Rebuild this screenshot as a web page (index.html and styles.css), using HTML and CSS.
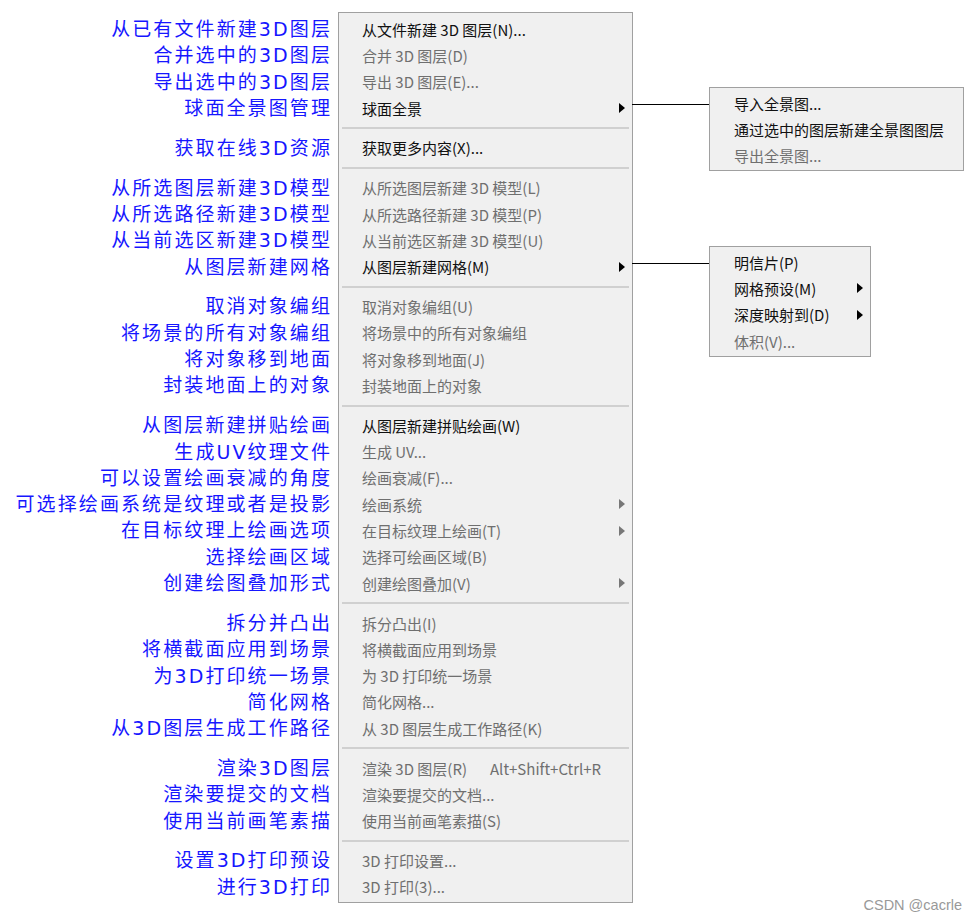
FILE: index.html
```html
<!DOCTYPE html>
<html lang="zh-CN">

<head>
    <meta charset="UTF-8">
    <meta name="viewport" content="width=device-width, initial-scale=1.0">
    <title>3D 菜单说明</title>
    <link rel="stylesheet" href="styles.css">
</head>

<body>
    <div class="page">

        <!-- explanations beside each menu row -->
        <div class="labels">
            <div class="label">从已有文件新建3D图层</div>
            <div class="label">合并选中的3D图层</div>
            <div class="label">导出选中的3D图层</div>
            <div class="label">球面全景图管理</div>
            <div class="gap"></div>
            <div class="label">获取在线3D资源</div>
            <div class="gap"></div>
            <div class="label">从所选图层新建3D模型</div>
            <div class="label">从所选路径新建3D模型</div>
            <div class="label">从当前选区新建3D模型</div>
            <div class="label">从图层新建网格</div>
            <div class="gap"></div>
            <div class="label">取消对象编组</div>
            <div class="label">将场景的所有对象编组</div>
            <div class="label">将对象移到地面</div>
            <div class="label">封装地面上的对象</div>
            <div class="gap"></div>
            <div class="label">从图层新建拼贴绘画</div>
            <div class="label">生成UV纹理文件</div>
            <div class="label">可以设置绘画衰减的角度</div>
            <div class="label">可选择绘画系统是纹理或者是投影</div>
            <div class="label">在目标纹理上绘画选项</div>
            <div class="label">选择绘画区域</div>
            <div class="label">创建绘图叠加形式</div>
            <div class="gap"></div>
            <div class="label">拆分并凸出</div>
            <div class="label">将横截面应用到场景</div>
            <div class="label">为3D打印统一场景</div>
            <div class="label">简化网格</div>
            <div class="label">从3D图层生成工作路径</div>
            <div class="gap"></div>
            <div class="label">渲染3D图层</div>
            <div class="label">渲染要提交的文档</div>
            <div class="label">使用当前画笔素描</div>
            <div class="gap"></div>
            <div class="label">设置3D打印预设</div>
            <div class="label">进行3D打印</div>
        </div>

        <!-- the 3D menu itself -->
        <div class="menu">
            <div class="item">从文件新建 3D 图层(N)...</div>
            <div class="item off">合并 3D 图层(D)</div>
            <div class="item off">导出 3D 图层(E)...</div>
            <div class="item">球面全景<span class="arrow"></span></div>
            <div class="sep"></div>
            <div class="item">获取更多内容(X)...</div>
            <div class="sep"></div>
            <div class="item off">从所选图层新建 3D 模型(L)</div>
            <div class="item off">从所选路径新建 3D 模型(P)</div>
            <div class="item off">从当前选区新建 3D 模型(U)</div>
            <div class="item">从图层新建网格(M)<span class="arrow"></span></div>
            <div class="sep"></div>
            <div class="item off">取消对象编组(U)</div>
            <div class="item off">将场景中的所有对象编组</div>
            <div class="item off">将对象移到地面(J)</div>
            <div class="item off">封装地面上的对象</div>
            <div class="sep"></div>
            <div class="item">从图层新建拼贴绘画(W)</div>
            <div class="item off">生成 UV...</div>
            <div class="item off">绘画衰减(F)...</div>
            <div class="item off">绘画系统<span class="arrow"></span></div>
            <div class="item off">在目标纹理上绘画(T)<span class="arrow"></span></div>
            <div class="item off">选择可绘画区域(B)</div>
            <div class="item off">创建绘图叠加(V)<span class="arrow"></span></div>
            <div class="sep"></div>
            <div class="item off">拆分凸出(I)</div>
            <div class="item off">将横截面应用到场景</div>
            <div class="item off">为 3D 打印统一场景</div>
            <div class="item off">简化网格...</div>
            <div class="item off">从 3D 图层生成工作路径(K)</div>
            <div class="sep"></div>
            <div class="item off"><span class="name">渲染 3D 图层(R)</span><span class="shortcut">Alt+Shift+Ctrl+R</span></div>
            <div class="item off">渲染要提交的文档...</div>
            <div class="item off">使用当前画笔素描(S)</div>
            <div class="sep"></div>
            <div class="item off">3D 打印设置...</div>
            <div class="item off">3D 打印(3)...</div>
        </div>

        <!-- opened submenus -->
        <div class="link link-pano"></div>
        <div class="submenu submenu-pano">
            <div class="item">导入全景图...</div>
            <div class="item">通过选中的图层新建全景图图层</div>
            <div class="item off">导出全景图...</div>
        </div>

        <div class="link link-mesh"></div>
        <div class="submenu submenu-mesh">
            <div class="item">明信片(P)</div>
            <div class="item">网格预设(M)<span class="arrow"></span></div>
            <div class="item">深度映射到(D)<span class="arrow"></span></div>
            <div class="item off">体积(V)...</div>
        </div>

        <div class="watermark">CSDN @cacrle</div>
    </div>
</body>

</html>
```

FILE: styles.css
```css
body {
    margin: 0;
    padding: 0;
    background: #fff;
}

.page {
    position: relative;
    display: flex;
    width: 980px;
    height: 920px;
    padding-top: 12px;
    box-sizing: border-box;
}

/* left column of blue notes */
.labels {
    width: 338px;
    padding: 4px 6px 0 0;
    box-sizing: border-box;
    text-align: right;
    font-family: "DejaVu Sans", "Noto Sans CJK SC", sans-serif;
    font-size: 19px;
    letter-spacing: 2.1px;
    color: #1616ff;
}

.label {
    height: 26.3px;
    line-height: 26.3px;
    white-space: nowrap;
}

.gap {
    height: 13.6px;
}

/* menu */
.menu,
.submenu {
    background: #f0f0f0;
    border: 1px solid #a0a0a0;
    box-sizing: border-box;
    font-family: "Noto Sans CJK SC", sans-serif;
    font-size: 15px;
    color: #111;
}

.menu {
    width: 295px;
    height: 891px;
    padding: 3px 0 1px;
}

.item {
    display: flex;
    align-items: center;
    height: 26.3px;
    padding: 0 7px 0 23px;
    white-space: nowrap;
}

.item.off {
    color: #6f6f6f;
}

.name {
    width: 128px;
}

.arrow {
    margin-left: auto;
    width: 0;
    height: 0;
    border-left: 6px solid #000;
    border-top: 5px solid transparent;
    border-bottom: 5px solid transparent;
}

.off .arrow {
    border-left-color: #777;
}

.sep {
    height: 2px;
    margin: 6px 3px 5.6px;
    background: #d0d0d0;
}

/* submenus hang to the right of the menu */
.submenu {
    position: absolute;
    left: 709px;
    padding: 2px 0;
}

.submenu .item {
    padding-left: 24px;
}

.submenu-pano {
    top: 87px;
    width: 255px;
    height: 84px;
}

.submenu-pano .item {
    height: 26px;
}

.submenu-mesh {
    top: 246px;
    width: 162px;
    height: 111px;
}

.link {
    position: absolute;
    left: 632px;
    width: 77px;
    height: 1px;
    background: #000;
}

.link-pano {
    top: 104px;
}

.link-mesh {
    top: 263px;
}

.watermark {
    position: absolute;
    right: 18px;
    bottom: 7px;
    font-family: "Liberation Sans", sans-serif;
    font-size: 14.5px;
    color: #999;
}
```
